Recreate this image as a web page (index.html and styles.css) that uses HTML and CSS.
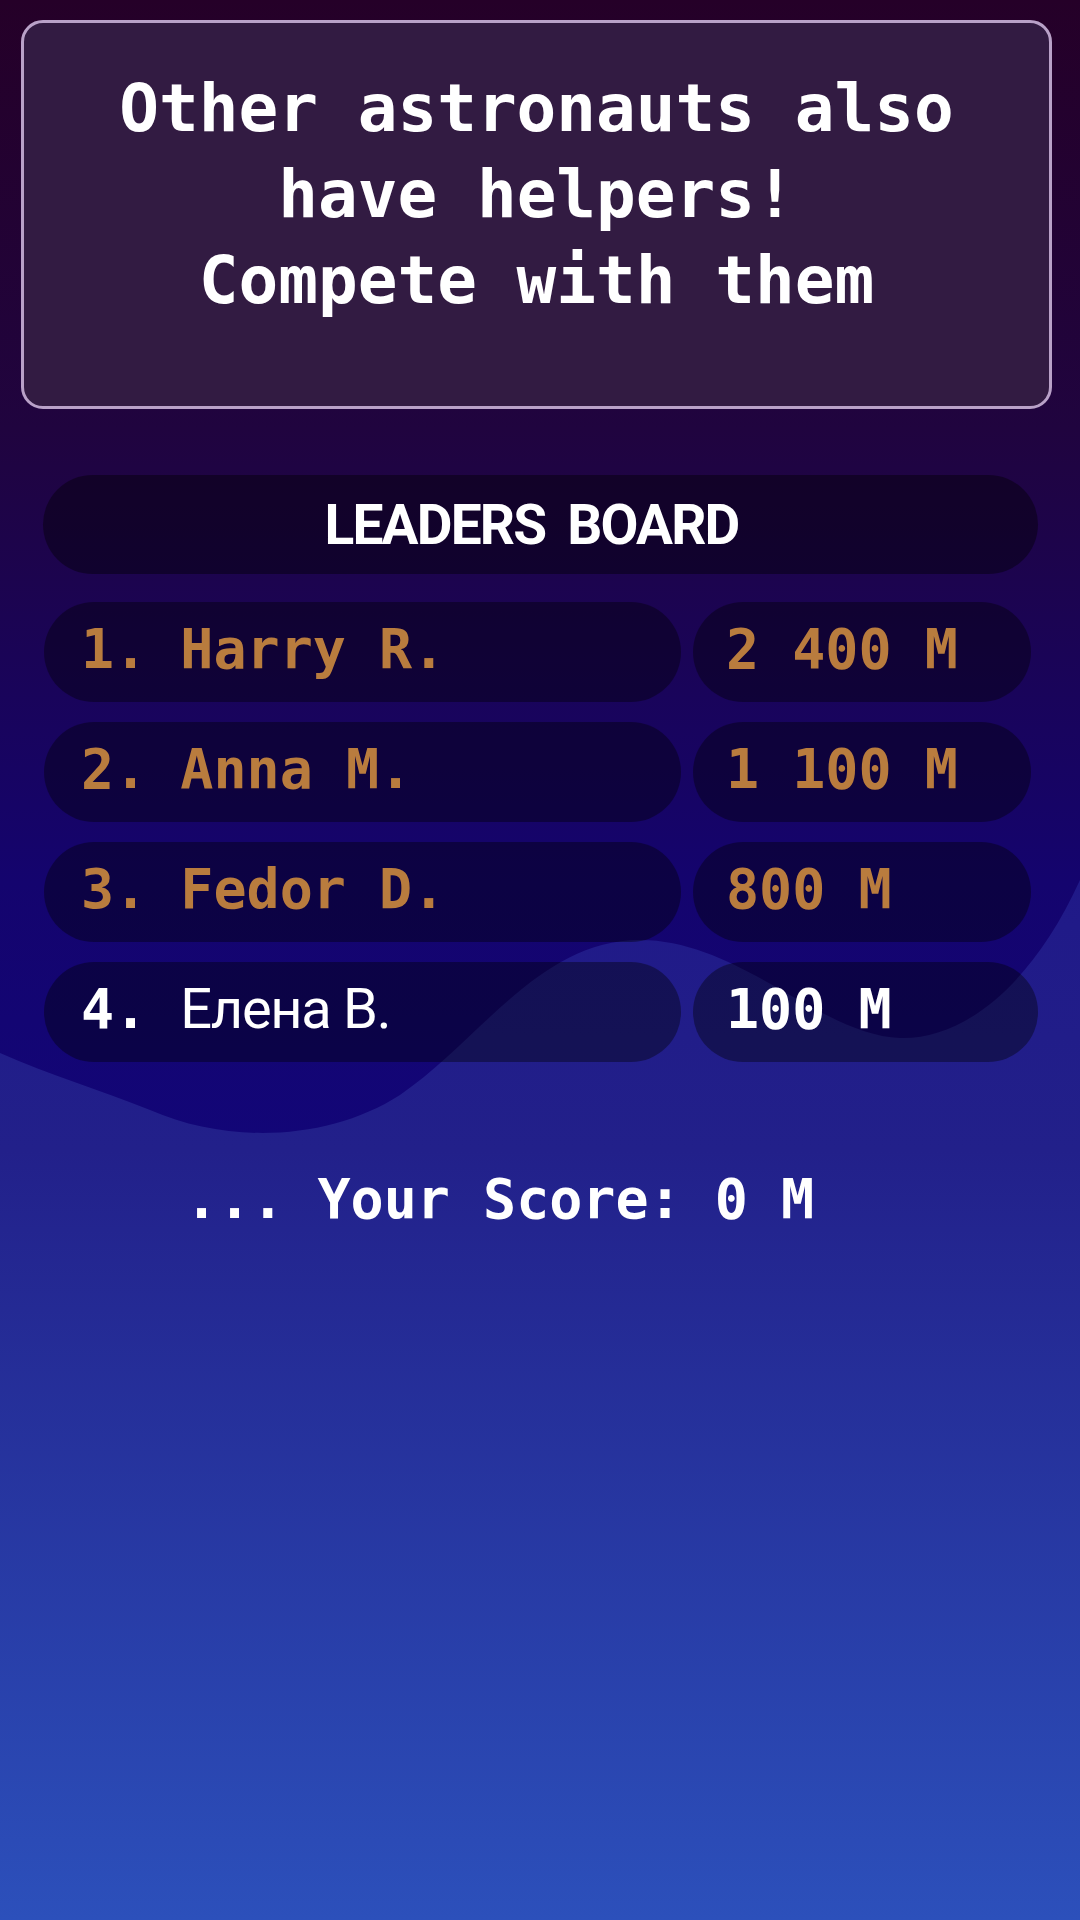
FILE: index.html
```html
<!DOCTYPE html>
<html lang="en">
<head>
    <meta charset="UTF-8">
    <meta name="viewport" content="width=device-width, initial-scale=1.0">
    <title>Leaders Board</title>
    <link rel="stylesheet" href="styles.css">
</head>
<body>
    <div class="screen">
        <!-- фон: тёмная волна поверх светлого градиента -->
        <svg class="wave" width="1080" height="1160" viewBox="0 0 1080 1160">
            <defs>
                <linearGradient id="darkBg" x1="0" y1="0" x2="0" y2="1160" gradientUnits="userSpaceOnUse">
                    <stop offset="0" stop-color="#250028"/>
                    <stop offset="0.37" stop-color="#20043f"/>
                    <stop offset="0.76" stop-color="#14046e"/>
                    <stop offset="1" stop-color="#120678"/>
                </linearGradient>
            </defs>
            <path d="M0,0 H1080 V880 C1030,990 960,1040 900,1038 C820,1035 740,940 640,940 C540,940 480,1040 400,1095 C330,1140 230,1145 150,1110 C100,1090 50,1075 0,1053 Z" fill="url(#darkBg)"/>
        </svg>

        <div class="content">
            <div class="intro">
                Other astronauts also<br>
                have helpers!<br>
                Compete with them
            </div>

            <div class="board">
                <div class="board-title">LEADERS BOARD</div>
                <div class="rows">
                    <div class="row">
                        <div class="pill name">1. Harry R.</div>
                        <div class="pill score">2 400 M</div>
                    </div>
                    <div class="row">
                        <div class="pill name">2. Anna M.</div>
                        <div class="pill score">1 100 M</div>
                    </div>
                    <div class="row">
                        <div class="pill name">3. Fedor D.</div>
                        <div class="pill score">800 M</div>
                    </div>
                    <div class="row me">
                        <div class="pill name">4. <span class="alt">Елена В.</span></div>
                        <div class="pill score">100 M</div>
                    </div>
                </div>
            </div>

            <div class="your-score">... Your Score: 0 M</div>
        </div>
    </div>
</body>
</html>
```

FILE: styles.css
```css
body {
    margin: 0;
    font-family: "DejaVu Sans Mono", "Liberation Mono", monospace;
    color: #fff;
}
.screen {
    position: relative;
    width: 1080px;
    min-height: 1920px;
    overflow: hidden;
    background: linear-gradient(180deg, #1e1284 0px, #1e1486 700px, #22208a 1150px, #2c50bb 1920px);
}
.wave {
    position: absolute;
    top: 0;
    left: 0;
}
.content {
    position: relative;
    z-index: 1;
    padding: 20px 28px 0 21px;
}
.intro {
    box-sizing: border-box;
    height: 389px;
    padding-top: 43px;
    background-color: #321b42;
    border: 3px solid #b9a1c8;
    border-radius: 22px;
    text-align: center;
    font-size: 66px;
    font-weight: bold;
    line-height: 86px;
}
.board {
    margin: 66px 0 0 22px;
}
.board-title {
    width: 995px;
    height: 99px;
    border-radius: 50px;
    background-color: rgba(0, 0, 0, 0.4);
    display: flex;
    align-items: center;
    justify-content: center;
    font-family: "Liberation Sans Narrow", Roboto, sans-serif;
    font-size: 55px;
    font-weight: bold;
    letter-spacing: -1.8px;
    word-spacing: 10px;
    padding-right: 18px;
    box-sizing: border-box;
}
.rows {
    margin-top: 28px;
    margin-left: 1px;
    display: flex;
    flex-direction: column;
    gap: 20px;
}
.row {
    display: flex;
    gap: 12px;
}
.pill {
    box-sizing: border-box;
    height: 100px;
    border-radius: 50px;
    background-color: rgba(0, 0, 0, 0.38);
    display: flex;
    align-items: center;
    padding-bottom: 6px;
    font-size: 55px;
    font-weight: bold;
    line-height: 56px;
    color: #b97c3e;
    white-space: pre;
}
.name {
    width: 637px;
    padding-left: 37px;
}
.score {
    width: 338px;
    padding-left: 33px;
}
.me .score {
    width: 345px;
}
.me .pill {
    color: #fff;
}
.alt {
    font-family: "Liberation Sans Narrow", Roboto, sans-serif;
    font-size: 56px;
    font-weight: normal;
    letter-spacing: -1.3px;
}
.your-score {
    margin-top: 102px;
    padding-left: 164px;
    font-size: 55px;
    font-weight: bold;
    line-height: 70px;
}
```
